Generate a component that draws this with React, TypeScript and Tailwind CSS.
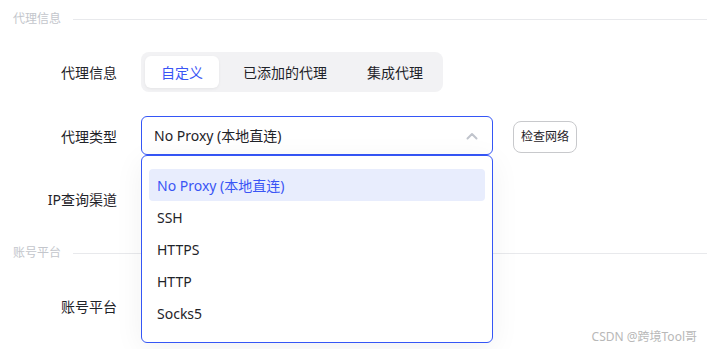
import React from 'react';

const font = { fontFamily: '"Noto Sans", "Noto Sans CJK SC", sans-serif' };

const SectionTitle: React.FC<{ title: string }> = ({ title }) => (
  <div className="flex items-center h-[38px] gap-3">
    <span className="text-[12px] text-[#c3c6cc] whitespace-nowrap">{title}</span>
    <div className="flex-1 h-px bg-[#e8e9ec]"></div>
  </div>
);

const Label: React.FC<{ text: string }> = ({ text }) => (
  <div className="w-[104px] text-right text-[14px] text-[#1f2329] shrink-0">{text}</div>
);

const options = ['No Proxy (本地直连)', 'SSH', 'HTTPS', 'HTTP', 'Socks5'];

const App: React.FC = () => {
  return (
    <div className="relative w-[707px] h-[349px] bg-white overflow-hidden pl-[13px]" style={font}>
      <SectionTitle title="代理信息" />

      <div className="flex items-center h-[40px] mt-[14px] gap-6">
        <Label text="代理信息" />
        <div className="flex items-center p-1 gap-2 bg-[#f2f2f4] rounded-lg h-[40px]">
          <div className="px-4 h-[32px] flex items-center bg-white rounded-md shadow-[0_1px_3px_rgba(0,0,0,0.06)] text-[14px] text-[#3a55f5]">
            自定义
          </div>
          <div className="px-4 h-[32px] flex items-center text-[14px] text-[#1f2329]">已添加的代理</div>
          <div className="px-4 h-[32px] flex items-center text-[14px] text-[#1f2329]">集成代理</div>
        </div>
      </div>

      <div className="flex items-start h-[40px] mt-[24px] gap-6 relative z-10">
        <div className="h-[40px] flex items-center">
          <Label text="代理类型" />
        </div>
        <div className="relative w-[352px] h-[39px]">
          <div className="w-full h-full border border-[#3556f6] rounded-md flex items-center justify-between pl-3 pr-[14px] bg-white">
            <span className="text-[14px] text-[#1f2329]">No Proxy (本地直连)</span>
            <svg width="12" height="8" viewBox="0 0 12 8" fill="none">
              <path d="M1.5 6.5 L6 2 L10.5 6.5" stroke="#c0c4cc" strokeWidth="2" strokeLinecap="round" strokeLinejoin="round" />
            </svg>
          </div>
          <div className="absolute left-0 top-[39px] w-[352px] h-[188px] bg-white border border-[#3556f6] rounded-md px-[7px] pt-[13px] shadow-[0_6px_30px_rgba(0,0,30,0.06)]">
            {options.map((o, i) => (
              <div
                key={o}
                className={
                  i === 0
                    ? 'h-[32px] flex items-center px-2 rounded bg-[#e8edfd] text-[14px] text-[#3a55f5]'
                    : 'h-[32px] flex items-center px-2 text-[14px] text-[#1f2329]'
                }
              >
                {o}
              </div>
            ))}
          </div>
        </div>
        <button className="ml-[-4px] w-[64px] h-[32px] mt-[5px] border border-[#c8c9cc] rounded-lg text-[12px] text-[#1f2329] bg-white">
          检查网络
        </button>
      </div>

      <div className="flex items-center h-[40px] mt-[23px] gap-6">
        <Label text="IP查询渠道" />
      </div>

      <div className="mt-[15px]">
        <SectionTitle title="账号平台" />
      </div>

      <div className="flex items-center h-[40px] mt-[14px] gap-6">
        <Label text="账号平台" />
      </div>

      <div className="absolute right-[10px] bottom-[3px] text-[12px] text-[#b8b8b8]">CSDN @跨境Tool哥</div>
    </div>
  );
};

export default App;
